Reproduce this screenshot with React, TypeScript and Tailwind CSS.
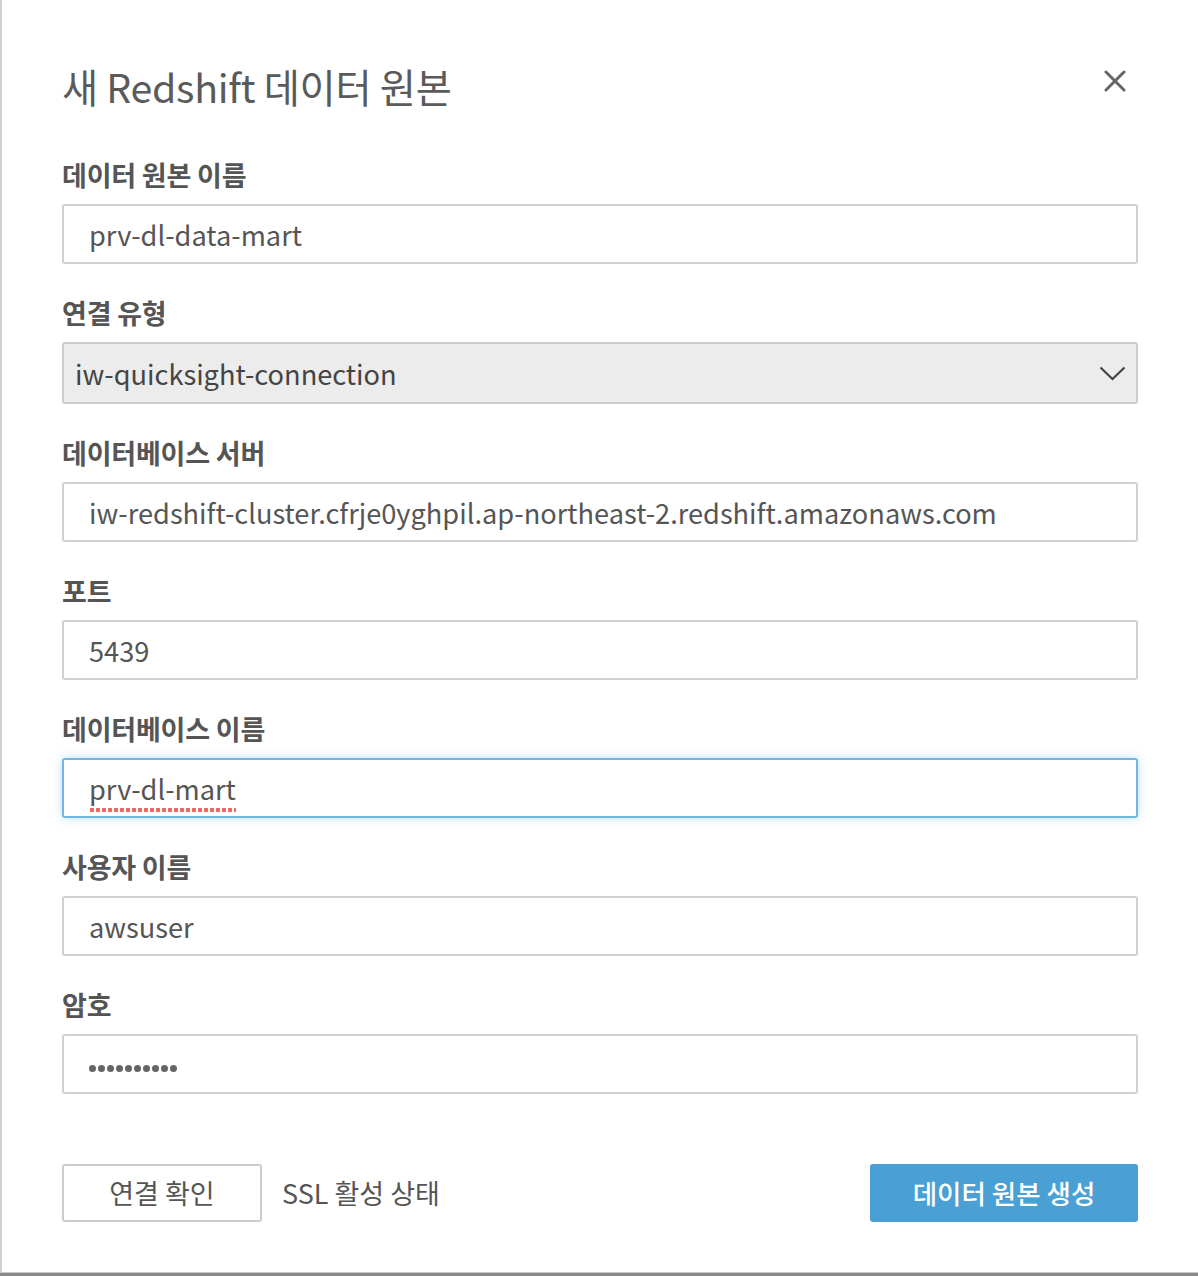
import React from "react";

const font = { fontFamily: '"Noto Sans CJK KR", "Noto Sans", sans-serif' };

function Label({ children }: { children: React.ReactNode }) {
  return (
    <div className="text-[27px] leading-[30px] font-bold text-[#555555] tracking-[-0.2px]">
      {children}
    </div>
  );
}

function Field({
  label,
  children,
  focused,
}: {
  label: string;
  children: React.ReactNode;
  focused?: boolean;
}) {
  return (
    <div className="flex flex-col">
      <Label>{label}</Label>
      <div
        className={
          focused
            ? "mt-[14px] h-[60px] rounded-[3px] border-2 border-[#74b5e0] bg-white shadow-[0_0_10px_rgba(102,175,233,0.45)] flex items-center pl-[25px] text-[27.2px] text-[#555555]"
            : "mt-[14px] h-[60px] rounded-[3px] border-2 border-[#d0d0d0] bg-white flex items-center pl-[25px] text-[27.2px] text-[#555555]"
        }
      >
        {children}
      </div>
    </div>
  );
}

export default function App() {
  return (
    <div className="w-[1198px] h-[1276px] bg-white flex flex-col" style={font}>
      <div className="flex-1 flex border-l-2 border-[#cfcfcf]">
        <div className="flex-1 pl-[60px] pr-[60px] pt-[62px] flex flex-col">
          <div className="flex items-center justify-between h-[48px]">
            <div className="text-[39.3px] leading-[48px] text-[#5a5a5a] tracking-[-0.3px]">
              새 Redshift 데이터 원본
            </div>
            <svg width="22" height="22" viewBox="0 0 22 22" className="mr-[12px] -mt-[10px]">
              <path d="M2 2 L20 20 M20 2 L2 20" stroke="#666" strokeWidth="3" strokeLinecap="round" />
            </svg>
          </div>

          <div className="mt-[50px] flex flex-col gap-[34px]">
            <Field label="데이터 원본 이름">prv-dl-data-mart</Field>

            <div className="flex flex-col">
              <Label>연결 유형</Label>
              <div className="mt-[14px] h-[62px] rounded-[3px] border-2 border-[#cccccc] bg-[#ececec] flex items-center justify-between pl-[11px] pr-[10px] text-[27.2px] text-[#444444]">
                <span>iw-quicksight-connection</span>
                <svg width="27" height="15" viewBox="0 0 27 15">
                  <path d="M1.5 1.5 L13.5 13 L25.5 1.5" fill="none" stroke="#444" strokeWidth="2.2" />
                </svg>
              </div>
            </div>

            <Field label="데이터베이스 서버">
              iw-redshift-cluster.cfrje0yghpil.ap-northeast-2.redshift.amazonaws.com
            </Field>
            <Field label="포트">5439</Field>
            <Field label="데이터베이스 이름" focused>
              <span className="relative">
                prv-dl-mart
                <span className="absolute left-0 right-0 bottom-[-5px] h-[6px] bg-[radial-gradient(circle,#ea6a62_2.1px,transparent_2.5px)] bg-[length:6px_6px] bg-repeat-x" />
              </span>
            </Field>
            <Field label="사용자 이름">awsuser</Field>
            <Field label="암호">
              <div className="flex gap-[2px] items-center mt-[8px]">
                {Array.from({ length: 10 }).map((_, i) => (
                  <span key={i} className="w-[7px] h-[7px] rounded-full bg-[#666666]" />
                ))}
              </div>
            </Field>
          </div>

          <div className="mt-[70px] flex items-center justify-between">
            <div className="flex items-center">
              <div className="w-[200px] h-[58px] rounded-[3px] border-2 border-[#cccccc] flex items-center justify-center text-[27px] text-[#555555]">
                연결 확인
              </div>
              <div className="ml-[20px] text-[27px] text-[#555555]">SSL 활성 상태</div>
            </div>
            <div className="w-[268px] h-[58px] rounded-[3px] bg-[#4a9fd5] flex items-center justify-center text-[26.5px] font-medium text-white">
              데이터 원본 생성
            </div>
          </div>
        </div>
      </div>
      <div className="h-[1px] bg-[#cccccc]" />
      <div className="h-[3px] bg-[#8a8a8a]" />
    </div>
  );
}
